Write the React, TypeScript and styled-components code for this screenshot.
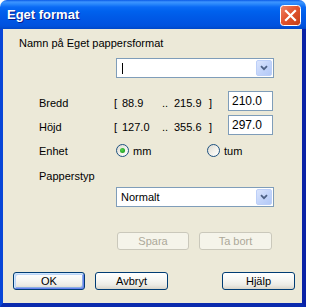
import React from "react";
import styled, { createGlobalStyle } from "styled-components";

const GlobalStyle = createGlobalStyle`
  html, body {
    margin: 0;
    padding: 0;
    background: #ffffff;
  }
  body {
    font-family: "Liberation Sans", Arial, sans-serif;
    font-size: 11px;
    color: #000;
  }
`;

const Window = styled.div`
  width: 306px;
  height: 307px;
  display: flex;
  flex-direction: column;
  border-radius: 7px 7px 0 0;
  overflow: hidden;
`;

const TitleBar = styled.div`
  flex: none;
  height: 29px;
  display: flex;
  align-items: flex-start;
  padding: 0 5px 0 7px;
  box-sizing: border-box;
  background: linear-gradient(
    to bottom,
    #0a5ae6 0px,
    #3d95ff 2px,
    #2a88fb 4px,
    #0a6af5 7px,
    #0062ee 11px,
    #005be8 16px,
    #0055e3 22px,
    #0052dd 26px,
    #0047c8 29px
  );
`;

const Title = styled.div`
  flex: 1;
  margin-top: 7px;
  color: #fff;
  font: bold 13px/15px "Liberation Sans", Arial, sans-serif;
  text-shadow: 1px 1px 0 #0a1e8c;
`;

const CloseButton = styled.div`
  width: 21px;
  height: 21px;
  margin-top: 5px;
  display: flex;
`;

const Frame = styled.div`
  flex: 1;
  display: flex;
  flex-direction: column;
  background: #ece9d8;
  border-left: 3px solid #0846d8;
  border-right: 4px solid #0a22a6;
  border-bottom: 4px solid #0a2aae;
`;

const Label = styled.div<{ $indent?: number; $top?: number }>`
  margin-top: ${(p) => p.$top ?? 0}px;
  padding-left: ${(p) => p.$indent ?? 0}px;
  line-height: 13px;
  white-space: nowrap;
`;

const Combo = styled.div<{ $top: number }>`
  margin: ${(p) => p.$top}px 0 0 113px;
  width: 158px;
  height: 20px;
  box-sizing: border-box;
  border: 1px solid #7f9db9;
  background: #fff;
  padding: 1px;
  display: flex;
  align-items: center;
`;

const ComboText = styled.div`
  flex: 1;
  padding-left: 3px;
  line-height: 13px;
  display: flex;
  align-items: center;
`;

const Caret = styled.span`
  display: block;
  width: 1px;
  height: 11px;
  margin-left: 1px;
  background: #000;
`;

const ComboArrow = styled.div`
  width: 16px;
  align-self: stretch;
  box-sizing: border-box;
  border: 1px solid #bccff8;
  border-radius: 2px;
  background: linear-gradient(135deg, #dbe5fd 0%, #c4d5fa 50%, #b3c9f7 100%);
  display: flex;
  align-items: center;
  justify-content: center;
`;

const FieldGrid = styled.div`
  margin: 13px 0 0 36px;
  display: grid;
  grid-template-columns: 75px 114px 45px;
  grid-auto-rows: 20px;
  row-gap: 4px;
`;

const FieldLabel = styled.div<{ $pad?: number }>`
  padding-top: ${(p) => p.$pad ?? 6}px;
  line-height: 13px;
`;

const Range = styled.div`
  padding-top: 6px;
  line-height: 13px;
  display: grid;
  grid-template-columns: 8px 40px 12px 35px auto;
`;

const TextInput = styled.div`
  box-sizing: border-box;
  height: 20px;
  border: 1px solid #7f9db9;
  background: #fff;
  padding: 0 3px;
  line-height: 18px;
  font-size: 12px;
`;

const RadioGroup = styled.div`
  grid-column: 2 / 4;
  display: grid;
  grid-template-columns: 91px auto;
  padding-left: 2px;
`;

const RadioOption = styled.div`
  display: flex;
  align-items: flex-start;
  gap: 4px;
`;

const RadioCircle = styled.span<{ $checked?: boolean }>`
  margin-top: 5px;
  width: 13px;
  height: 13px;
  box-sizing: border-box;
  border-radius: 50%;
  border: 1px solid #1c5180;
  background: linear-gradient(135deg, #dcd9d0 0%, #f3f2ec 55%, #ffffff 100%);
  display: flex;
  align-items: center;
  justify-content: center;
  &::after {
    content: "";
    display: ${(p) => (p.$checked ? "block" : "none")};
    width: 5px;
    height: 5px;
    border-radius: 50%;
    background: radial-gradient(circle at 40% 40%, #55d551 0%, #21a121 70%, #1a8f1a 100%);
  }
`;

const RadioText = styled.span`
  padding-top: 6px;
  line-height: 13px;
`;

const ButtonRow = styled.div<{ $top: number; $left: number; $right?: number }>`
  margin-top: ${(p) => p.$top}px;
  padding: 0 ${(p) => p.$right ?? 0}px 0 ${(p) => p.$left}px;
  display: flex;
  gap: 10px;
`;

const Button = styled.div<{ $width: number; $disabled?: boolean; $default?: boolean; $push?: boolean }>`
  width: ${(p) => p.$width}px;
  height: 18px;
  box-sizing: border-box;
  margin-left: ${(p) => (p.$push ? "auto" : "0")};
  border-radius: 3px;
  display: flex;
  align-items: center;
  justify-content: center;
  line-height: 13px;
  font-size: 11px;
  border: 1px solid ${(p) => (p.$disabled ? "#cac8bb" : "#003c74")};
  color: ${(p) => (p.$disabled ? "#aca899" : "#000")};
  background: ${(p) =>
    p.$disabled
      ? "#f5f4ea"
      : "linear-gradient(to bottom, #ffffff 0%, #f7f7f4 40%, #ecebe5 75%, #d9d5ca 100%)"};
  box-shadow: ${(p) =>
    p.$default
      ? "inset 1px 1px 0 #cee7ff, inset -1px -1px 0 #6982ee, inset 2px 2px 0 #bcd4f6, inset -2px -2px 0 #89ade4"
      : "none"};
`;

function CloseIcon() {
  return (
    <svg width="21" height="21" viewBox="0 0 21 21">
      <defs>
        <linearGradient id="closeBg" x1="0" y1="0" x2="1" y2="1">
          <stop offset="0" stopColor="#f0866a" />
          <stop offset="0.45" stopColor="#e2542f" />
          <stop offset="1" stopColor="#c33d14" />
        </linearGradient>
      </defs>
      <rect x="0.5" y="0.5" width="20" height="20" rx="3" fill="url(#closeBg)" stroke="#ffffff" />
      <path d="M6 6 L15 15 M15 6 L6 15" stroke="#ffffff" strokeWidth="2.2" strokeLinecap="square" />
    </svg>
  );
}

function Chevron() {
  return (
    <svg width="8" height="6" viewBox="0 0 8 6">
      <path d="M1 1.2 L4 4.2 L7 1.2" fill="none" stroke="#4d6185" strokeWidth="1.8" />
    </svg>
  );
}

export default function App() {
  return (
    <>
      <GlobalStyle />
      <Window>
        <TitleBar>
          <Title>Eget format</Title>
          <CloseButton>
            <CloseIcon />
          </CloseButton>
        </TitleBar>
        <Frame>
          <Label $indent={16} $top={8}>
            Namn på Eget pappersformat
          </Label>
          <Combo $top={8}>
            <ComboText>
              <Caret />
            </ComboText>
            <ComboArrow>
              <Chevron />
            </ComboArrow>
          </Combo>

          <FieldGrid>
            <FieldLabel>Bredd</FieldLabel>
            <Range>
              <span>[</span>
              <span>88.9</span>
              <span>..</span>
              <span>215.9</span>
              <span>]</span>
            </Range>
            <TextInput>210.0</TextInput>

            <FieldLabel>Höjd</FieldLabel>
            <Range>
              <span>[</span>
              <span>127.0</span>
              <span>..</span>
              <span>355.6</span>
              <span>]</span>
            </Range>
            <TextInput>297.0</TextInput>

            <FieldLabel>Enhet</FieldLabel>
            <RadioGroup>
              <RadioOption>
                <RadioCircle $checked />
                <RadioText>mm</RadioText>
              </RadioOption>
              <RadioOption>
                <RadioCircle />
                <RadioText>tum</RadioText>
              </RadioOption>
            </RadioGroup>

            <FieldLabel $pad={7}>Papperstyp</FieldLabel>
          </FieldGrid>

          <Combo $top={4}>
            <ComboText>Normalt</ComboText>
            <ComboArrow>
              <Chevron />
            </ComboArrow>
          </Combo>

          <ButtonRow $top={25} $left={114}>
            <Button $width={72} $disabled>
              Spara
            </Button>
            <Button $width={73} $disabled>
              Ta bort
            </Button>
          </ButtonRow>

          <ButtonRow $top={22} $left={10} $right={7}>
            <Button $width={72} $default>
              OK
            </Button>
            <Button $width={73}>Avbryt</Button>
            <Button $width={73} $push>
              Hjälp
            </Button>
          </ButtonRow>
        </Frame>
      </Window>
    </>
  );
}
